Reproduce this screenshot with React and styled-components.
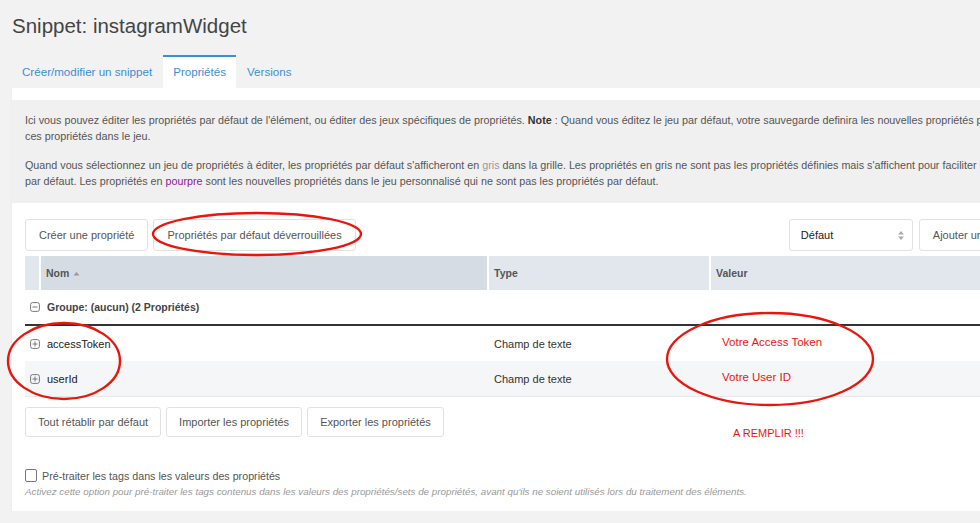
import React from "react";
import styled, { createGlobalStyle } from "styled-components";

const GlobalStyle = createGlobalStyle`
  html, body {
    margin: 0;
    padding: 0;
    background: #f2f2f2;
    overflow: hidden;
  }
  body {
    font-family: "Liberation Sans", Arial, Helvetica, sans-serif;
    color: #555;
  }
`;

const Page = styled.div`
  width: 1083px;
  padding: 14px 0 0 12px;
  position: relative;
`;

const Title = styled.h1`
  margin: 0 0 17px 0;
  font-size: 20.5px;
  font-weight: normal;
  color: #444;
  line-height: 24px;
`;

const Tabs = styled.div`
  display: flex;
  height: 33px;
`;

const Tab = styled.div`
  padding: 0 10px;
  display: flex;
  align-items: center;
  font-size: 11.6px;
  color: #3d8ed5;
  background: ${(p) => (p.active ? "#fff" : "transparent")};
  border-top: 2px solid ${(p) => (p.active ? "#3d8ed5" : "transparent")};
  margin-right: 1px;
  padding-bottom: 2px;
  box-sizing: border-box;
`;

const Panel = styled.div`
  background: #fff;
  padding: 12px 0 14px 0;
  box-shadow: 0 1px 2px rgba(0, 0, 0, 0.06);
`;

const Description = styled.div`
  background: #f0f0f0;
  padding: 12px 13px 14px 13px;
  font-size: 10.75px;
  line-height: 16px;
  color: #555;
  white-space: nowrap;
  overflow: hidden;

  p {
    margin: 0 0 13px 0;
  }
  p:last-child {
    margin: 0;
  }
  b {
    color: #333;
  }
  .gris {
    color: #999;
  }
  .pourpre {
    color: #8b1a9b;
  }
`;

const Body = styled.div`
  padding: 16px 13px 0 13px;
`;

const Toolbar = styled.div`
  display: flex;
  gap: 5px;
  align-items: center;
  margin-bottom: 5px;
  margin-top: ${(p) => p.top || 0}px;
`;

const Spacer = styled.div`
  flex: 1;
`;

const Button = styled.button`
  height: ${(p) => (p.small ? "30px" : "32px")};
  padding: 0 ${(p) => (p.small ? "12px" : "13px")};
  background: #fff;
  border: 1px solid #e2e2e2;
  border-radius: 3px;
  font-family: inherit;
  font-size: 11px;
  color: #555;
  white-space: nowrap;
`;

const Select = styled.div`
  width: 124px;
  height: 32px;
  box-sizing: border-box;
  border: 1px solid #e2e2e2;
  border-radius: 3px;
  display: flex;
  align-items: center;
  justify-content: space-between;
  padding: 0 7px 0 11px;
  font-size: 11px;
  color: #222;
  margin-right: 1px;
`;

const Table = styled.div`
  width: 100%;
`;

const Row = styled.div`
  display: grid;
  grid-template-columns: 16px 448px 222px 1fr;
  align-items: center;
  min-height: ${(p) => p.h || 35}px;
  background: ${(p) => p.bg || "#fff"};
  border-bottom: ${(p) => p.line || "none"};
  font-size: 11px;
  color: #333;
`;

const HeadCell = styled.div`
  height: 34px;
  display: flex;
  align-items: center;
  padding-left: ${(p) => (p.first ? "0" : "5px")};
  background: ${(p) => (p.sorted ? "#d5dce4" : "#e2e7ed")};
  border-right: 2px solid #fff;
  font-weight: bold;
  font-size: 10.5px;
  color: #555;
  box-sizing: border-box;
  gap: 4px;
`;

const GroupCell = styled.div`
  grid-column: 1 / -1;
  display: flex;
  align-items: center;
  gap: 7px;
  padding-left: 5px;
  font-weight: bold;
  font-size: 10.5px;
  color: #444;
`;

const NameCell = styled.div`
  grid-column: 1 / 3;
  display: flex;
  align-items: center;
  gap: 7px;
  padding-left: 5px;
  color: #222;
`;

const Cell = styled.div`
  padding-left: ${(p) => p.pad || 5}px;
  color: ${(p) => p.color || "#333"};
  font-size: ${(p) => p.size || 11}px;
  margin-top: ${(p) => p.up || 0}px;
`;

const Note = styled.div`
  color: #e8180c;
  font-size: 11px;
  margin: -15px 0 0 708px;
`;

const Option = styled.label`
  display: flex;
  align-items: center;
  gap: 5px;
  margin-top: 30px;
  font-size: 10.7px;
  color: #555;
`;

const Box = styled.span`
  width: 10px;
  height: 11px;
  border: 1px solid #777;
  border-radius: 2px;
  display: inline-block;
`;

const Help = styled.div`
  font-size: 9.8px;
  font-style: italic;
  color: #999;
  margin-top: 4px;
`;

const Annotations = styled.svg`
  position: absolute;
  left: 0;
  top: 0;
  pointer-events: none;
`;

const ToggleIcon = ({ plus }) => (
  <svg width="10" height="10" viewBox="0 0 10 10">
    <rect x="0.6" y="0.6" width="8.8" height="8.8" rx="2" fill="none" stroke="#777" strokeWidth="1" />
    <line x1="2.5" y1="5" x2="7.5" y2="5" stroke="#777" strokeWidth="1" />
    {plus && <line x1="5" y1="2.5" x2="5" y2="7.5" stroke="#777" strokeWidth="1" />}
  </svg>
);

const SortArrow = () => (
  <svg width="7" height="5" viewBox="0 0 7 5">
    <path d="M0.5 4.5 L3.5 1 L6.5 4.5 Z" fill="#999" />
  </svg>
);

const SelectArrows = () => (
  <svg width="8" height="11" viewBox="0 0 8 11">
    <path d="M1 4.5 L4 1 L7 4.5 Z" fill="#aaa" />
    <path d="M1 6.5 L4 10 L7 6.5 Z" fill="#aaa" />
  </svg>
);

const properties = [
  { name: "accessToken", type: "Champ de texte", value: "Votre Access Token", bg: "#fff" },
  { name: "userId", type: "Champ de texte", value: "Votre User ID", bg: "#f5f6f8" },
];

export default function App() {
  return (
    <>
      <GlobalStyle />
      <Page>
        <Title>Snippet: instagramWidget</Title>
        <Tabs>
          <Tab>Créer/modifier un snippet</Tab>
          <Tab active>Propriétés</Tab>
          <Tab>Versions</Tab>
        </Tabs>
        <Panel>
          <Description>
            <p>
              Ici vous pouvez éditer les propriétés par défaut de l'élément, ou éditer des jeux spécifiques de
              propriétés. <b>Note</b> : Quand vous éditez le jeu par défaut, votre sauvegarde definira les nouvelles
              propriétés par défaut.
              <br />
              ces propriétés dans le jeu.
            </p>
            <p>
              Quand vous sélectionnez un jeu de propriétés à éditer, les propriétés par défaut s'afficheront en{" "}
              <span className="gris">gris</span> dans la grille. Les propriétés en gris ne sont pas les propriétés
              définies mais s'affichent pour faciliter la comparaison.
              <br />
              par défaut. Les propriétés en <span className="pourpre">pourpre</span> sont les nouvelles propriétés
              dans le jeu personnalisé qui ne sont pas les propriétés par défaut.
            </p>
          </Description>
          <Body>
            <Toolbar>
              <Button>Créer une propriété</Button>
              <Button>Propriétés par défaut déverrouillées</Button>
              <Spacer />
              <Select>
                Défaut
                <SelectArrows />
              </Select>
              <Button>Ajouter un jeu de propriétés</Button>
            </Toolbar>
            <Table>
              <Row h={34}>
                <HeadCell first />
                <HeadCell sorted>
                  Nom <SortArrow />
                </HeadCell>
                <HeadCell>Type</HeadCell>
                <HeadCell>Valeur</HeadCell>
              </Row>
              <Row h={34} line="2px solid #333">
                <GroupCell>
                  <ToggleIcon />
                  Groupe: (aucun) (2 Propriétés)
                </GroupCell>
              </Row>
              {properties.map((p, i) => (
                <Row key={p.name} bg={p.bg} line={i === properties.length - 1 ? "1px solid #e6e8ec" : "none"}>
                  <NameCell>
                    <ToggleIcon plus />
                    {p.name}
                  </NameCell>
                  <Cell>{p.type}</Cell>
                  <Cell color="#e8180c" up={-3} size={11.5} pad={11}>
                    {p.value}
                  </Cell>
                </Row>
              ))}
            </Table>
            <Toolbar top={10}>
              <Button small>Tout rétablir par défaut</Button>
              <Button small>Importer les propriétés</Button>
              <Button small>Exporter les propriétés</Button>
            </Toolbar>
            <Note>A REMPLIR !!!</Note>
            <Option>
              <Box />
              Pré-traiter les tags dans les valeurs des propriétés
            </Option>
            <Help>
              Activez cette option pour pré-traiter les tags contenus dans les valeurs des propriétés/sets de
              propriétés, avant qu'ils ne soient utilisés lors du traitement des éléments.
            </Help>
          </Body>
        </Panel>
        <Annotations width="980" height="523">
          <ellipse cx="257" cy="234" rx="104" ry="21" fill="none" stroke="#e8160c" strokeWidth="2.4" />
          <ellipse cx="64" cy="361" rx="56" ry="38" fill="none" stroke="#e8160c" strokeWidth="2.4" />
          <ellipse cx="770" cy="359" rx="103" ry="46" fill="none" stroke="#e8160c" strokeWidth="2.4" />
        </Annotations>
      </Page>
    </>
  );
}
